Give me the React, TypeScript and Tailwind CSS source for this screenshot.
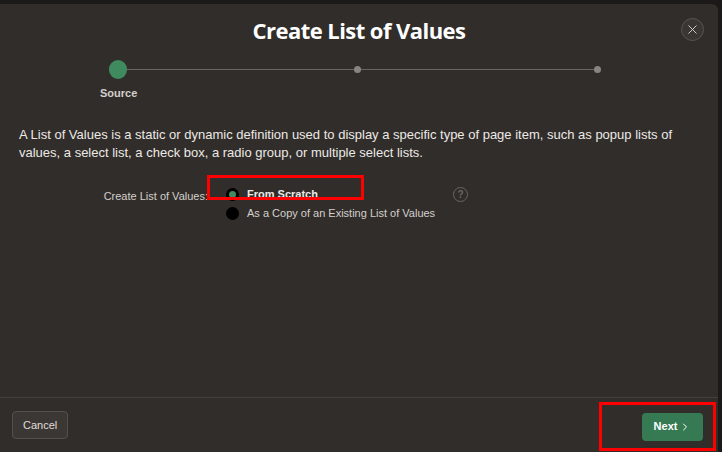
import { X, ChevronRight } from 'lucide-react';

export default function App() {
  return (
    <div className="w-[722px] h-[452px] bg-[#1c1a18] flex flex-col overflow-hidden" style={{ fontFamily: '"Liberation Sans", Arial, sans-serif' }}>
      <div className="h-[4px] shrink-0" />
      <div className="flex-1 w-[718px] bg-[#312d2a] rounded-tr-md flex flex-col">
        <div className="relative h-[52px] flex items-center justify-center">
          <h1 className="text-[22px] font-bold text-white tracking-tight" style={{ fontFamily: '"Open Sans", sans-serif' }}>Create List of Values</h1>
          <button className="absolute right-[14px] top-[14px] w-[23px] h-[23px] rounded-full border border-[#5a5551] bg-[#3a3633] flex items-center justify-center text-[#d8d4d0]">
            <X className="w-[15px] h-[15px]" strokeWidth={1.5} />
          </button>
        </div>
        <div className="relative h-[60px]">
          <div className="absolute left-[118px] top-[13px] w-[480px] h-px bg-[#6b6561]" />
          <div className="absolute left-[109px] top-[4px] w-[18px] h-[19px] rounded-full bg-[#3f8a5e]" />
          <div className="absolute left-[354px] top-[10px] w-[7px] h-[7px] rounded-full bg-[#8a8480]" />
          <div className="absolute left-[594px] top-[10px] w-[7px] h-[7px] rounded-full bg-[#8a8480]" />
          <div className="absolute left-[100px] top-[29px] text-[11px] font-bold text-[#d4d0cc]">Source</div>
        </div>
        <p className="px-[19px] mt-[10px] text-[13px] leading-[18px] text-[#ece9e6]">
          A List of Values is a static or dynamic definition used to display a specific type of page item, such as popup lists of values, a select list, a check box, a radio group, or multiple select lists.
        </p>
        <div className="flex mt-[22px] text-[11px]">
          <div className="w-[210px] text-right pr-[2px] pt-[4px] text-[#d4d0cc]">Create List of Values:</div>
          <div className="relative flex flex-col gap-[2px] ml-[16px]">
            <div className="absolute left-[-19px] top-[-9px] w-[157px] h-[25px] border-[3px] border-[#ff0000]" />
            <div className="flex items-center gap-[8px] h-[17px] mt-[2px]">
              <span className="w-[13px] h-[13px] rounded-full bg-black flex items-center justify-center">
                <span className="w-[7px] h-[7px] rounded-full bg-[#3f8a5e]" />
              </span>
              <span className="font-bold text-[#ece9e6]">From Scratch</span>
            </div>
            <div className="flex items-center gap-[8px] h-[17px]">
              <span className="w-[13px] h-[13px] rounded-full bg-black" />
              <span className="text-[#d4d0cc]">As a Copy of an Existing List of Values</span>
            </div>
          </div>
          <div className="ml-[18px] mt-[3px] w-[15px] h-[15px] rounded-full border border-[#6b6561] text-[#6b6561] text-[10px] font-bold flex items-center justify-center">?</div>
        </div>
        <div className="flex-1" />
        <div className="border-t border-[#45403c] h-[55px] flex items-center justify-between pl-[12px] pr-[14px]">
          <button className="h-[28px] px-[10px] rounded-sm bg-[#3b3734] border border-[#55504c] text-[11px] text-[#e0ddd9]">Cancel</button>
          <div className="border-[3px] border-[#ff0000] w-[117px] h-[49px] flex items-center justify-end pr-[10px] mr-[-12px] mt-[3px]">
            <button className="h-[28px] w-[61px] rounded-sm bg-[#357a52] text-[11px] font-bold text-white flex items-center justify-center gap-[2px]">
              Next <ChevronRight className="w-[12px] h-[12px]" />
            </button>
          </div>
        </div>
      </div>
    </div>
  );
}
